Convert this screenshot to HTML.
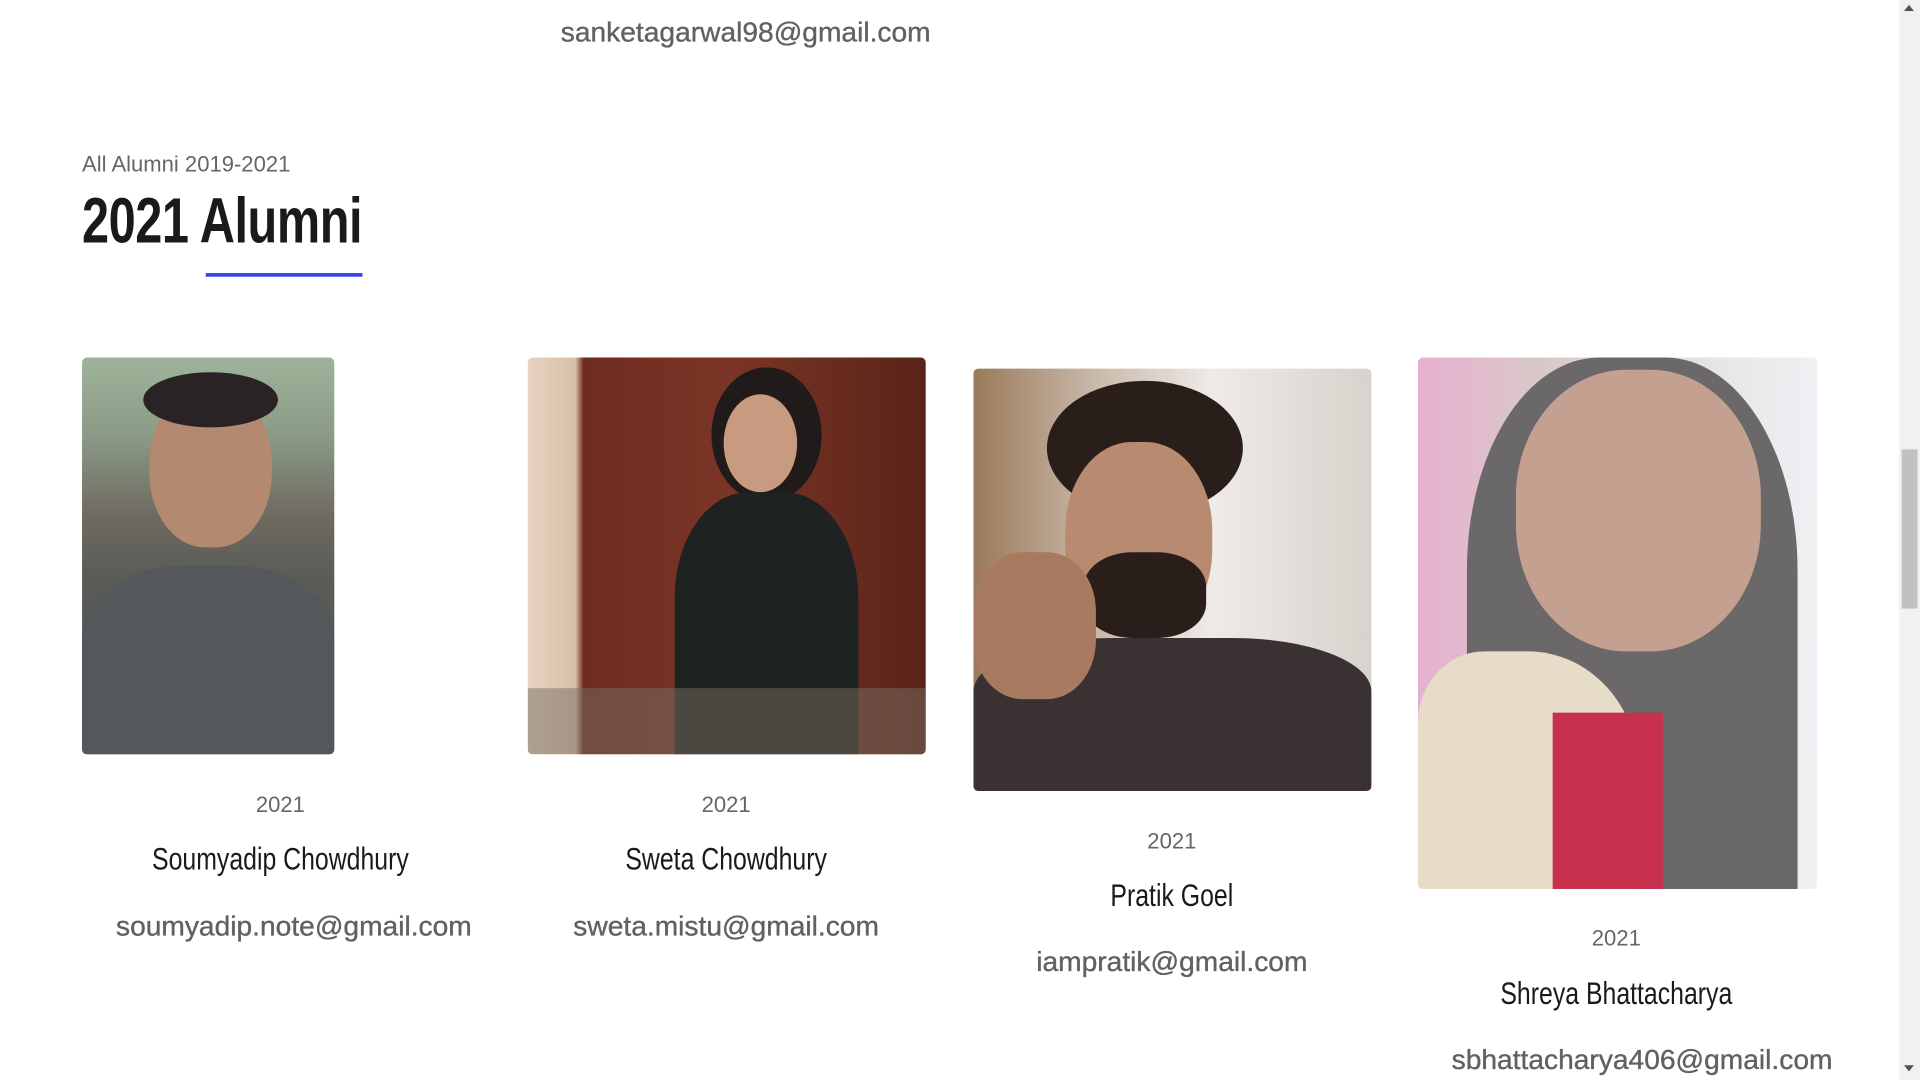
<!DOCTYPE html>
<html><head><meta charset="utf-8"><style>
html,body{margin:0;padding:0;width:1920px;height:1080px;overflow:hidden;background:#fff}
#w{position:absolute;left:0;top:0;width:1568px;height:882px;transform:scale(1.22449);transform-origin:0 0;font-family:"Liberation Sans",sans-serif}
.a{position:absolute}
.em{color:#616161;font-size:23px;text-align:center;width:440px;margin-left:-220px;letter-spacing:0;-webkit-text-stroke:0.3px #616161}
.yr{color:#666;font-size:18px;text-align:center;width:300px;margin-left:-150px}
.nm{color:#1a1a1a;font-size:26px;text-align:center;width:400px;margin-left:-200px;transform:scaleX(0.78)}
.img{position:absolute;border-radius:4px;overflow:hidden}
</style></head><body><div id="w">
<div class="a em" style="left:609px;top:13px">sanketagarwal98@gmail.com</div>
<div class="a" style="left:67px;top:124px;font-size:18px;color:#666">All Alumni 2019-2021</div>
<div class="a" style="left:67px;top:151px;font-size:52px;font-weight:bold;color:#1a1a1a;transform:scaleX(0.765);transform-origin:0 0;letter-spacing:-0.5px">2021 Alumni</div>
<div class="a" style="left:168px;top:223px;width:128px;height:3px;background:#3a44e6"></div>

<div class="img" style="left:67px;top:292px;width:206px;height:324px;background:linear-gradient(180deg,#9fb39a 0%,#8a9a86 20%,#6f6a60 40%,#5a5c58 55%,#4d504f 100%)">
<div class="a" style="left:55px;top:20px;width:100px;height:135px;border-radius:50% 50% 45% 45%;background:#b38a70"></div>
<div class="a" style="left:50px;top:12px;width:110px;height:45px;border-radius:50%;background:#2a2326"></div>
<div class="a" style="left:0;top:170px;width:206px;height:154px;border-radius:40% 40% 0 0;background:#55585a"></div></div>

<div class="img" style="left:431px;top:292px;width:325px;height:324px;background:linear-gradient(90deg,#e5d3c0 0%,#d8c0a8 12%,#6e2c20 14%,#7a3526 50%,#5a2418 100%)">
<div class="a" style="left:150px;top:8px;width:90px;height:110px;border-radius:50%;background:#201a1a"></div>
<div class="a" style="left:160px;top:30px;width:60px;height:80px;border-radius:50%;background:#c89a80"></div>
<div class="a" style="left:120px;top:110px;width:150px;height:214px;border-radius:40% 40% 0 0;background:#1e2220"></div>
<div class="a" style="left:0;top:270px;width:325px;height:54px;background:rgba(120,110,100,.5)"></div></div>

<div class="img" style="left:795px;top:301px;width:325px;height:345px;background:linear-gradient(90deg,#9a7a5a 0%,#c8b8a8 30%,#eeeae6 60%,#d8d2cc 100%)">
<div class="a" style="left:60px;top:10px;width:160px;height:110px;border-radius:50%;background:#2a1e1a"></div>
<div class="a" style="left:75px;top:60px;width:120px;height:160px;border-radius:45%;background:#b88a70"></div>
<div class="a" style="left:90px;top:150px;width:100px;height:70px;border-radius:40%;background:#2a1e1a"></div>
<div class="a" style="left:0;top:220px;width:325px;height:125px;border-radius:35% 35% 0 0;background:#3a3232"></div>
<div class="a" style="left:0;top:150px;width:100px;height:120px;border-radius:40%;background:#a87a60"></div></div>

<div class="img" style="left:1158px;top:292px;width:326px;height:434px;background:linear-gradient(90deg,#e8b0d0 0%,#d8c8c8 30%,#e8e8ea 80%,#f0f0f4 100%)">
<div class="a" style="left:40px;top:0;width:270px;height:434px;border-radius:40% 40% 0 0;background:#6a6868"></div>
<div class="a" style="left:80px;top:10px;width:200px;height:230px;border-radius:45%;background:#c4a090"></div>
<div class="a" style="left:0;top:240px;width:180px;height:194px;border-radius:30% 50% 0 0;background:#e6dcc8"></div>
<div class="a" style="left:110px;top:290px;width:90px;height:144px;background:#c83050"></div></div>

<div class="a yr" style="left:229px;top:647px">2021</div>
<div class="a nm" style="left:229px;top:686px">Soumyadip Chowdhury</div>
<div class="a em" style="left:240px;top:743px">soumyadip.note@gmail.com</div>

<div class="a yr" style="left:593px;top:647px">2021</div>
<div class="a nm" style="left:593px;top:686px">Sweta Chowdhury</div>
<div class="a em" style="left:593px;top:743px">sweta.mistu@gmail.com</div>

<div class="a yr" style="left:957px;top:677px">2021</div>
<div class="a nm" style="left:957px;top:716px">Pratik Goel</div>
<div class="a em" style="left:957px;top:772px">iampratik@gmail.com</div>

<div class="a yr" style="left:1320px;top:756px">2021</div>
<div class="a nm" style="left:1320px;top:796px">Shreya Bhattacharya</div>
<div class="a em" style="left:1341px;top:852px">sbhattacharya406@gmail.com</div>

<div class="a" style="left:1551px;top:0;width:17px;height:882px;background:#f1f1f1"></div>
<div class="a" style="left:1553px;top:367px;width:13px;height:130px;background:#c1c1c1"></div>
<div class="a" style="left:1555px;top:4px;width:0;height:0;border-left:4px solid transparent;border-right:4px solid transparent;border-bottom:5px solid #505050"></div>
<div class="a" style="left:1555px;top:870px;width:0;height:0;border-left:4px solid transparent;border-right:4px solid transparent;border-top:5px solid #505050"></div>
</div></body></html>
